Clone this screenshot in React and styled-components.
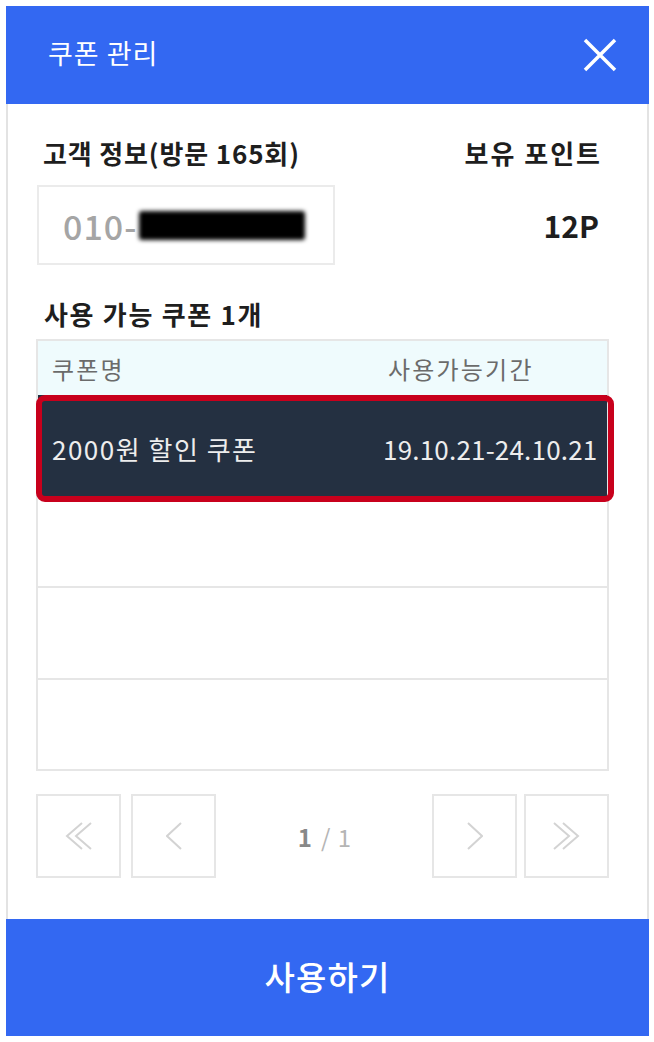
import React from "react";
import styled, { createGlobalStyle } from "styled-components";

const GlobalStyle = createGlobalStyle`
  html, body {
    margin: 0;
    padding: 0;
    background: #ffffff;
  }
  body {
    font-family: "Noto Sans CJK KR", "Noto Sans", sans-serif;
    color: #1f1f1f;
  }
  * { box-sizing: border-box; }
`;

const BLUE = "#3368f2";

const Modal = styled.div`
  margin: 6px 0 0 6px;
  width: 643px;
  display: flex;
  flex-direction: column;
  background: #fff;
`;

const Header = styled.header`
  height: 98px;
  background: ${BLUE};
  display: flex;
  align-items: center;
  justify-content: space-between;
  padding: 0 32px 0 42px;
`;

const Title = styled.h1`
  margin: 0 0 6px;
  color: #fff;
  font-size: 27px;
  font-weight: 400;
  letter-spacing: 1px;
  line-height: 1;
`;

const IconButton = styled.button`
  border: 0;
  background: transparent;
  padding: 0;
  width: 34px;
  height: 34px;
  display: flex;
  cursor: pointer;
`;

const Body = styled.section`
  border-left: 2px solid #e3e3e3;
  border-right: 2px solid #e3e3e3;
  padding: 33px 38px 41px 28px;
  display: flex;
  flex-direction: column;
`;

const InfoGrid = styled.div`
  display: grid;
  grid-template-columns: 1fr auto;
  row-gap: 16px;
  align-items: center;
`;

const Label = styled.div`
  font-size: 26px;
  font-weight: 700;
  line-height: 32px;
  letter-spacing: ${(p) => (p.$right ? "2px" : "0.85px")};
  color: #1e1e1e;
  padding-left: ${(p) => (p.$right ? "0" : "7px")};
  padding-right: ${(p) => (p.$right ? "7px" : "0")};
  text-align: ${(p) => (p.$right ? "right" : "left")};
`;

const PhoneBox = styled.div`
  margin-left: 1px;
  width: 298px;
  height: 80px;
  border: 2px solid #ebebeb;
  padding-left: 24px;
  display: flex;
  align-items: center;
  font-size: 34px;
  font-weight: 500;
  letter-spacing: 1px;
  color: #a5a5a5;
`;

const Redacted = styled.span`
  display: inline-block;
  width: 166px;
  height: 29px;
  margin-left: 2px;
  border-radius: 3px;
  background: #000;
  filter: blur(2px);
`;

const Points = styled.div`
  font-size: 30px;
  font-weight: 700;
  color: #1e1e1e;
  padding-right: 10px;
  text-align: right;
`;

const SectionTitle = styled.h2`
  margin: 33px 0 0;
  padding-left: 8px;
  font-size: 26px;
  font-weight: 700;
  line-height: 32px;
  letter-spacing: 1.7px;
  color: #1e1e1e;
`;

const Table = styled.div`
  margin-top: 9px;
  border: 2px solid #e6e6e6;
  display: flex;
  flex-direction: column;
`;

const Row = styled.div`
  display: grid;
  grid-template-columns: 345px 1fr;
  align-items: center;
  height: ${(p) => p.$h}px;
  border-top: ${(p) => (p.$divider ? "2px solid #e6e6e6" : "0")};
`;

const HeadRow = styled(Row)`
  background: #effbfd;
  color: #6b6b6b;
  font-size: 24px;
  letter-spacing: 2.2px;
`;

const SelectedRow = styled(Row)`
  position: relative;
  background: #243041;
  color: #ededed;
  font-size: 26px;
  padding-top: 5px;
  &::after {
    content: "";
    position: absolute;
    top: 0;
    left: -2px;
    right: -7px;
    bottom: -6px;
    border: 6px solid #c8001c;
    border-radius: 9px;
    pointer-events: none;
  }
`;

const Cell = styled.div`
  padding-left: ${(p) => p.$pad}px;
  letter-spacing: ${(p) => p.$ls ?? "inherit"};
  white-space: nowrap;
`;

const Pager = styled.nav`
  margin-top: 23px;
  height: 84px;
  display: flex;
  align-items: center;
  justify-content: space-between;
`;

const PagerGroup = styled.div`
  display: flex;
  gap: ${(p) => p.$gap}px;
`;

const PageButton = styled.button`
  width: 85px;
  height: 84px;
  border: 2px solid #e6e6e6;
  background: #fff;
  padding: 0;
  display: flex;
  align-items: center;
  justify-content: center;
  cursor: pointer;
`;

const PageInfo = styled.div`
  font-size: 24px;
  color: #b5b5b5;
  letter-spacing: 1px;
  padding-left: 2px;
  b {
    color: #888;
    font-weight: 700;
    margin-right: 8px;
  }
`;

const Footer = styled.button`
  height: 117px;
  border: 0;
  width: 100%;
  background: ${BLUE};
  color: #fff;
  font-family: inherit;
  font-size: 33px;
  font-weight: 500;
  letter-spacing: 1.2px;
  display: flex;
  align-items: center;
  justify-content: center;
  padding: 0 0 4px;
  cursor: pointer;
`;

const CHEV = "#d3d3d3";

const Chevron = ({ dir = "left", double = false }) => {
  const w = double ? 27 : 16;
  const flip = dir === "right" ? `translate(${w} 0) scale(-1 1)` : undefined;
  return (
    <svg width={w} height="28" viewBox={`0 0 ${w} 28`} fill="none">
      <g transform={flip} stroke={CHEV} strokeWidth="2" strokeLinejoin="miter">
        {double ? (
          <>
            <polyline points="17,1 2,14 17,27" />
            <polyline points="26,1 11,14 26,27" />
          </>
        ) : (
          <polyline points="15,1 1,14 15,27" />
        )}
      </g>
    </svg>
  );
};

const CloseIcon = () => (
  <svg width="34" height="34" viewBox="0 0 34 34" fill="none">
    <path d="M2 2 L32 32 M32 2 L2 32" stroke="#fff" strokeWidth="3.5" />
  </svg>
);

export default function App() {
  return (
    <>
      <GlobalStyle />
      <Modal>
        <Header>
          <Title>쿠폰 관리</Title>
          <IconButton aria-label="닫기">
            <CloseIcon />
          </IconButton>
        </Header>
        <Body>
          <InfoGrid>
            <Label>고객 정보(방문 165회)</Label>
            <Label $right>보유 포인트</Label>
            <PhoneBox>
              010-<Redacted />
            </PhoneBox>
            <Points>12P</Points>
          </InfoGrid>

          <SectionTitle>사용 가능 쿠폰 1개</SectionTitle>

          <Table>
            <HeadRow $h={54}>
              <Cell $pad={14}>쿠폰명</Cell>
              <Cell $pad={5}>사용가능기간</Cell>
            </HeadRow>
            <SelectedRow $h={101}>
              <Cell $pad={14} $ls="1.5px">2000원 할인 쿠폰</Cell>
              <Cell $pad={0} $ls="0.2px">19.10.21-24.10.21</Cell>
            </SelectedRow>
            <Row $h={90} $divider />
            <Row $h={92} $divider />
            <Row $h={91} $divider />
          </Table>

          <Pager>
            <PagerGroup $gap={10}>
              <PageButton aria-label="처음">
                <Chevron dir="left" double />
              </PageButton>
              <PageButton aria-label="이전">
                <Chevron dir="left" />
              </PageButton>
            </PagerGroup>
            <PageInfo>
              <b>1</b>/ 1
            </PageInfo>
            <PagerGroup $gap={7}>
              <PageButton aria-label="다음">
                <Chevron dir="right" />
              </PageButton>
              <PageButton aria-label="마지막">
                <Chevron dir="right" double />
              </PageButton>
            </PagerGroup>
          </Pager>
        </Body>
        <Footer>사용하기</Footer>
      </Modal>
    </>
  );
}
